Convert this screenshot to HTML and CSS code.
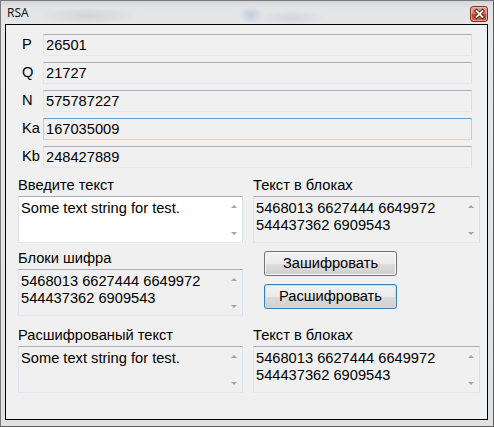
FILE: index.html
```html
<!DOCTYPE html>
<html lang="ru">
<head>
<meta charset="utf-8">
<title>RSA</title>
<link rel="stylesheet" href="styles.css">
</head>
<body>
<div class="window">
  <div class="titlebar">
    <span class="title">RSA</span>
    <span class="close">
      <svg width="17" height="16" viewBox="0 0 17 16">
        <path d="M5.5 5 L11.5 11 M11.5 5 L5.5 11" stroke="#4a1c14" stroke-width="3.6" stroke-linecap="square"/>
        <path d="M5.5 5 L11.5 11 M11.5 5 L5.5 11" stroke="#ffffff" stroke-width="1.8" stroke-linecap="square"/>
      </svg>
    </span>
  </div>
  <div class="client">
    <div class="keys">
      <span class="key-label">P</span><div class="field">26501</div>
      <span class="key-label">Q</span><div class="field">21727</div>
      <span class="key-label">N</span><div class="field">575787227</div>
      <span class="key-label">Ka</span><div class="field focused">167035009</div>
      <span class="key-label">Kb</span><div class="field">248427889</div>
    </div>
    <div class="panes">
      <div class="col left">
        <div class="cap">Введите текст</div>
        <div class="memo white">
          <div class="memo-text">Some text string for test.</div>
          <div class="sb"><i class="up"></i><i class="down"></i></div>
        </div>
        <div class="cap second">Блоки шифра</div>
        <div class="memo">
          <div class="memo-text">5468013 6627444 6649972 544437362 6909543</div>
          <div class="sb"><i class="up"></i><i class="down"></i></div>
        </div>
        <div class="cap third">Расшифрованый текст</div>
        <div class="memo">
          <div class="memo-text">Some text string for test.</div>
          <div class="sb"><i class="up"></i><i class="down"></i></div>
        </div>
      </div>
      <div class="col right">
        <div class="cap">Текст в блоках</div>
        <div class="memo">
          <div class="memo-text">5468013 6627444 6649972 544437362 6909543</div>
          <div class="sb"><i class="up"></i><i class="down"></i></div>
        </div>
        <button class="btn first">Зашифровать</button>
        <button class="btn default">Расшифровать</button>
        <div class="cap third-right">Текст в блоках</div>
        <div class="memo">
          <div class="memo-text">5468013 6627444 6649972 544437362 6909543</div>
          <div class="sb"><i class="up"></i><i class="down"></i></div>
        </div>
      </div>
    </div>
  </div>
</div>
</body>
</html>
```
FILE: styles.css
```css
html, body {
  margin: 0;
  padding: 0;
}

body {
  width: 494px;
  height: 427px;
  overflow: hidden;
  background: #8a8a8a;
  font-family: "Liberation Sans", Arial, sans-serif;
  font-size: 14.67px;
  color: #000;
}

.window {
  box-sizing: border-box;
  width: 494px;
  height: 427px;
  border: 1px solid #7a7a7a;
  border-right-color: #5e5e5e;
  border-bottom-color: #5e5e5e;
  padding: 0 5px 6px 4px;
  display: flex;
  flex-direction: column;
  background:
    radial-gradient(ellipse 50px 9px at 88px 15px, rgba(120, 120, 125, 0.16), rgba(120, 120, 125, 0) 100%),
    radial-gradient(ellipse 12px 9px at 250px 14px, rgba(90, 110, 200, 0.22), rgba(90, 110, 200, 0) 100%),
    radial-gradient(ellipse 34px 8px at 290px 17px, rgba(120, 120, 135, 0.14), rgba(120, 120, 135, 0) 100%),
    linear-gradient(#d2d5d9 0px, #e2e4e7 6px, #e6e7e9 30px, #e0e1e3 100%);
}

.titlebar {
  flex: none;
  height: 23px;
  display: flex;
  justify-content: space-between;
  align-items: flex-start;
}

.title {
  font-family: "Noto Sans", "Open Sans", sans-serif;
  font-size: 12px;
  line-height: 16px;
  margin: 4px 0 0 2px;
  color: #1b1b1b;
}

.close {
  box-sizing: border-box;
  width: 18px;
  height: 16px;
  margin-top: 5px;
  border: 1px solid #7d3326;
  border-radius: 3px;
  background: linear-gradient(#e8a391 0%, #d87a64 45%, #c4462e 52%, #d6664a 100%);
  box-shadow: inset 0 0 0 1px rgba(255, 220, 210, 0.45);
  display: flex;
  align-items: center;
  justify-content: center;
}

.close svg {
  display: block;
  margin: -1px;
}

.client {
  flex: 1;
  border: 1px solid #000;
  background: #f0f0f0;
}

.keys {
  display: grid;
  grid-template-columns: 21px 429px;
  grid-auto-rows: 22px;
  row-gap: 6px;
  align-items: center;
  padding: 9px 0 0 16px;
}

.key-label {
  line-height: 17px;
  padding-bottom: 1px;
}

.field {
  box-sizing: border-box;
  height: 22px;
  border: 1px solid;
  border-color: #abadb3 #dbdfe6 #e3e9ef #e2e3ea;
  background: #f0f0f0;
  padding: 0 2px;
  line-height: 20px;
  white-space: nowrap;
}

.field.focused {
  border-color: #6f9cc6 #b5d0e8 #c7dcee #b5d0e8;
}

.panes {
  display: flex;
  gap: 10px;
  padding: 9px 0 0 12px;
}

.col {
  display: flex;
  flex-direction: column;
}

.col.left {
  width: 225px;
}

.col.right {
  width: 227px;
}

.cap {
  height: 17px;
  line-height: 17px;
  margin-bottom: 2px;
  white-space: nowrap;
}

.cap.second {
  margin-top: 7px;
}

.cap.third {
  margin-top: 11px;
}

.cap.third-right {
  margin-top: 18px;
}

.memo {
  box-sizing: border-box;
  height: 47px;
  border: 1px solid;
  border-color: #abadb3 #dbdfe6 #e3e9ef #e2e3ea;
  background: #f0f0f0;
  display: flex;
}

.memo.white {
  background: #fff;
}

.memo-text {
  flex: 1;
  padding: 3px 0 0 2px;
  line-height: 17px;
  overflow: hidden;
}

.sb {
  width: 16px;
  display: flex;
  flex-direction: column;
  justify-content: space-between;
}

.sb i {
  height: 18px;
  display: flex;
  align-items: center;
  justify-content: center;
}

.sb i.up::before {
  content: "";
  width: 0;
  height: 0;
  border-left: 3px solid transparent;
  border-right: 3px solid transparent;
  border-bottom: 3px solid #a6a6a6;
}

.sb i.down::before {
  content: "";
  width: 0;
  height: 0;
  border-left: 3px solid transparent;
  border-right: 3px solid transparent;
  border-top: 3px solid #a6a6a6;
}

.btn {
  box-sizing: border-box;
  margin: 0 0 0 11px;
  width: 133px;
  height: 25px;
  padding: 0;
  border: 1px solid #707070;
  border-radius: 3px;
  background: linear-gradient(#f2f2f2 0%, #ebebeb 50%, #dddddd 51%, #cfcfcf 100%);
  box-shadow: inset 0 0 0 1px #fbfbfb;
  font-family: inherit;
  font-size: inherit;
  line-height: 17px;
  color: #000;
  text-align: center;
}

.btn.first {
  margin-top: 8px;
}

.btn.default {
  margin-top: 8px;
  border-color: #3c7fb1;
  box-shadow: inset 0 0 0 1px #b8e3f7;
}
```
